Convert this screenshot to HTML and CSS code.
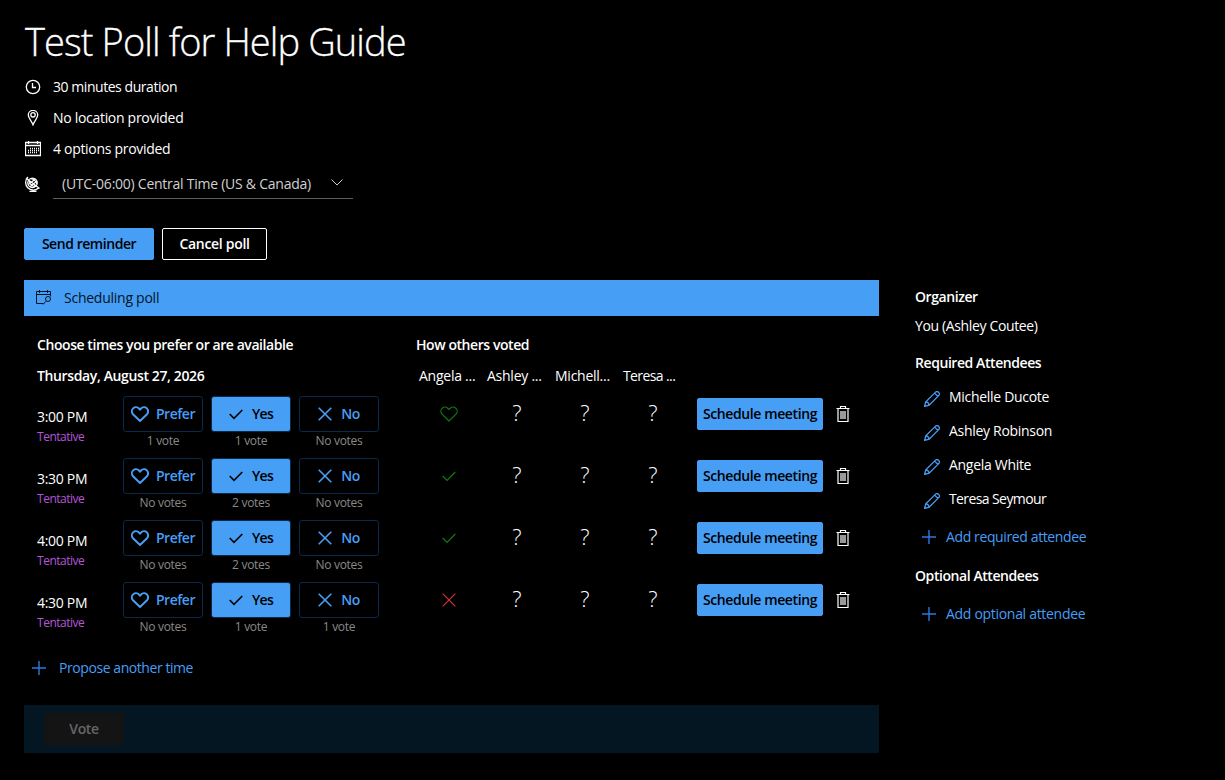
FILE: index.html
```
<!DOCTYPE html>
<html lang="en">
<head>
<meta charset="utf-8">
<title>Test Poll for Help Guide</title>
<link rel="stylesheet" href="styles.css">
</head>
<body>
<svg class="defs" aria-hidden="true">
  <symbol id="heart" viewBox="0 0 18 16"><path d="M9 15 2 8.200A4.100 4.100 0 0 1 8 2.500L9 3.500 10 2.500A4.100 4.100 0 0 1 16 8.200Z"/></symbol>
  <symbol id="check" viewBox="0 0 14 12"><path d="M.7 6 5 10.300 13.300 2"/></symbol>
  <symbol id="cross" viewBox="0 0 14 14"><path d="M.7.700 13.300 13.300M13.300.700.700 13.300"/></symbol>
  <symbol id="plus" viewBox="0 0 14 14"><path d="M7 0V14M0 7H14"/></symbol>
  <symbol id="pencil" viewBox="0 0 16 16"><path d="M.600 15.400 1.800 10.800 11.800.900Q13.200 0 14.600 1.400T15.100 4.200L5.200 14.200ZM1.800 10.800Q4.500 11 5.200 14.200M10.600 2.100 13.900 5.400"/></symbol>
  <symbol id="trash" viewBox="0 0 14 16"><path d="M.5 2.500H13.500M4.500 2.500V.500H9.500V2.500M2 2.500V15.500H12V2.500M5 5V13M7 5V13M9 5V13"/></symbol>
</svg>
<h1 class="title">Test Poll for Help Guide</h1>
<div class="meta"><svg class="meta-icon" viewBox="0 0 16 16"><circle cx="8" cy="8" r="6.700"/><path d="M7.500 4V8.500H11"/></svg><span class="m1">30 minutes duration</span></div>
<div class="meta"><svg class="meta-icon" viewBox="0 0 16 16"><path d="M8 14.800C7 12 3.300 8 3.300 4.800A4.700 4.400 0 0 1 12.700 4.800C12.700 8 9 12 8 14.800Z"/><circle cx="8" cy="4.800" r="2.200"/></svg><span class="m2">No location provided</span></div>
<div class="meta"><svg class="meta-icon" viewBox="0 0 16 16"><path d="M.500 1.500H15.500V14.500H.500ZM.500 4.500H15.500M3.500 0V3M12.500 0V3"/><path class="dots" d="M5 7.500H14M3 9.500H14M3 11.500H12"/></svg><span class="m3">4 options provided</span></div>
<div class="meta zone"><svg class="meta-icon globe" viewBox="0 0 16 16"><circle cx="7.500" cy="6.800" r="4.700"/><path d="M3 1A7 7 0 0 0 13.500 12M1 2 14.500 12.500M3.300 8.500 10.500 3M5 10.800 12 5M3.800 4C5 9 8 11 11 10M5.500 2.600C9 3 11 5 12 8M8 13.500V15.500M4.500 15.500H11.500"/></svg>
  <div class="select"><span class="m4">(UTC-06:00) Central Time (US &amp; Canada)</span><svg class="chevron" viewBox="0 0 12 7"><path d="M.500.500 6 6 11.500.500"/></svg></div></div>
<div class="actions"><button class="btn primary send"><span>Send reminder</span></button><button class="btn outline"><span>Cancel poll</span></button></div>
<div class="layout">
  <main class="poll">
    <div class="banner"><svg class="banner-icon" viewBox="0 0 16 16"><path d="M7.500 13.500H.500V1.500H14.500V6.500M.500 4.500H14.500M3.500 0V3M11.500 0V3M10 11.200 7 14.500"/><circle cx="12" cy="9" r="2.500"/></svg><span>Scheduling poll</span></div>
    <div class="heads"><h2 class="h-choose"><span>Choose times you prefer or are available</span></h2><h2 class="h-others"><span>How others voted</span></h2></div>
    <div class="heads names"><h2 class="h-date"><span>Thursday, August 27, 2026</span></h2><div class="people"><span>Angela ...</span><span>Ashley ...</span><span>Michell...</span><span class="tight">Teresa ...</span></div></div>
    <div class="rows" id="rows"></div>
    <a class="link propose"><svg class="plus"><use href="#plus"/></svg><span>Propose another time</span></a>
    <footer class="votebar"><button class="btn vote" disabled><span>Vote</span></button></footer>
  </main>
  <aside class="side">
    <h2 class="s-org"><span>Organizer</span></h2>
    <p class="you"><span>You (Ashley Coutee)</span></p>
    <h2 class="s-req"><span>Required Attendees</span></h2>
    <ul class="list">
      <li><svg><use href="#pencil"/></svg><span>Michelle Ducote</span></li>
      <li><svg><use href="#pencil"/></svg><span>Ashley Robinson</span></li>
      <li><svg><use href="#pencil"/></svg><span>Angela White</span></li>
      <li><svg><use href="#pencil"/></svg><span class="tight">Teresa Seymour</span></li>
    </ul>
    <a class="link add"><svg class="plus"><use href="#plus"/></svg><span class="fit">Add required attendee</span></a>
    <h2 class="s-opt"><span>Optional Attendees</span></h2>
    <a class="link add"><svg class="plus"><use href="#plus"/></svg><span>Add optional attendee</span></a>
  </aside>
</div>
<script src="poll.js"></script>
</body>
</html>
```
FILE: styles.css
```
* { box-sizing: border-box; }
body { margin: 0; padding: 15px 24px 0; height: 780px; overflow: hidden; background: #000; color: #fff; font: 14px/20px "Open Sans", "Noto Sans", sans-serif; letter-spacing: -0.3px; }
h1, h2, p, ul { margin: 0; padding: 0; }
svg { fill: none; stroke: currentColor; flex: none; }
.defs { position: absolute; width: 0; height: 0; }
.title { height: 56px; padding-left: 1px; font-size: 38px; line-height: 52px; font-weight: 300; letter-spacing: -0.9px; white-space: nowrap; -webkit-text-stroke: 0.3px #fff; }
h2 { font-size: 14px; line-height: 20px; font-weight: 600; letter-spacing: -0.43px; white-space: nowrap; }
.meta { display: flex; align-items: center; gap: 12px; height: 31px; padding-left: 1px; }
.meta-icon { width: 16px; height: 16px; stroke-width: 1.3; }
.m1 { letter-spacing: -0.45px; }
.m4 { letter-spacing: -0.25px; }
.dots { stroke-dasharray: 1 1; }
.zone { height: 30px; margin-top: 5px; }
.select { display: flex; align-items: center; width: 300px; height: 30px; padding: 0 10px 0 9px; justify-content: space-between; border-bottom: 1px solid #5c5c5c; color: #d0d0d0; }
.chevron { width: 12px; height: 7px; margin-top: -3px; }
.actions { display: flex; gap: 8px; margin-top: 29px; }
.btn { height: 32px; padding: 0; border: 1px solid #479ef5; border-radius: 2px; font: inherit; font-weight: 600; letter-spacing: -0.4px; background: #479ef5; color: #000; white-space: nowrap; }
.send { width: 130px; letter-spacing: -0.45px; }
.outline { width: 105px; background: #000; color: #fff; border-color: #fff; letter-spacing: -0.3px; }
.layout { display: flex; gap: 36px; margin-top: 20px; }
.poll { width: 855px; }
.banner { display: flex; align-items: center; gap: 12px; height: 36px; padding-left: 12px; background: #479ef5; color: #001526; letter-spacing: -0.25px; }
.banner-icon { width: 16px; height: 16px; }
.heads { display: flex; padding: 19px 0 0 13px; }
.h-choose, .h-date { width: 379px; }
.names { padding-top: 11px; }
.h-date { letter-spacing: -0.37px; }
.people { display: grid; grid-template-columns: repeat(4, 68px); padding-left: 3px; letter-spacing: -0.25px; }
.people .tight { letter-spacing: -0.6px; }
.rows { padding: 10px 0 0 13px; }
.slot { display: flex; height: 62px; }
.when { width: 86px; padding-top: 11px; }
.when small { display: block; color: #b456d8; font-size: 12px; letter-spacing: -0.48px; }
.choices { display: flex; gap: 8px; width: 292px; }
.choice { width: 80px; text-align: center; }
.choice small { display: block; font-size: 12px; line-height: 18px; color: #8a8a8a; }
.opt { display: flex; align-items: center; justify-content: center; gap: 9px; width: 80px; height: 36px; padding: 0; border: 1px solid #08294a; border-radius: 3px; background: #000; color: #479ef5; font: inherit; font-weight: 600; letter-spacing: -0.45px; }
.opt.on { background: #479ef5; color: #000; letter-spacing: -0.7px; }
.opt svg { stroke-width: 1.6; }
.heart { width: 18px; height: 16px; }
.check { width: 14px; height: 12px; }
.cross { width: 14px; height: 14px; }
.opt .heart { margin-right: -2px; stroke-width: 2; }
.marks { display: grid; grid-template-columns: repeat(4, 68px); width: 282px; height: 35px; align-items: center; justify-items: center; }
.marks svg { stroke-width: 1.2; }
.marks .good { color: #107c10; }
.marks .bad { color: #d13438; }
.q { font-size: 22px; font-weight: 300; line-height: 33px; height: 35px; letter-spacing: 0; }
.schedule { width: 126px; margin-top: 2px; }
.trash { width: 14px; height: 16px; margin: 10px 0 0 12.5px; stroke-width: 1.2; }
.link { display: flex; align-items: center; gap: 13px; height: 20px; color: #479ef5; }
.plus { width: 14px; height: 14px; color: #2f78de; stroke-width: 1.4; }
.propose { margin-top: 14px; padding-left: 8px; letter-spacing: -0.43px; }
.votebar { height: 48px; margin-top: 27px; padding: 8px 20px; background: #041621; }
.vote { width: 80px; background: #141414; border-color: #141414; color: #666; }
.side { padding-top: 7px; white-space: nowrap; }
.you { margin-top: 9px; letter-spacing: -0.36px; }
.s-req { margin-top: 17px; }
.list { list-style: none; margin-top: 14px; }
.list li { display: flex; gap: 9px; height: 34px; padding-left: 9px; }
.list svg { width: 16px; height: 16px; margin-top: 4px; color: #479ef5; stroke-width: 1.3; }
.list .tight { letter-spacing: -0.6px; }
.add { gap: 10px; margin-top: 4px; padding-left: 7px; }
.fit { letter-spacing: -0.38px; }
.s-opt { margin-top: 19px; }
.s-opt + .add { margin-top: 18px; }
```
FILE: poll.js
```
const slots = [
  ["3:00 PM", ["1 vote", "1 vote", "No votes"], "heart", "good"],
  ["3:30 PM", ["No votes", "2 votes", "No votes"], "check", "good"],
  ["4:00 PM", ["No votes", "2 votes", "No votes"], "check", "good"],
  ["4:30 PM", ["No votes", "1 vote", "1 vote"], "cross", "bad"]
];
const icon = (name, extra = "") => `<svg class="${name} ${extra}"><use href="#${name}"/></svg>`;
const options = [["heart", "Prefer"], ["check", "Yes"], ["cross", "No"]];
document.getElementById("rows").innerHTML = slots.map(([time, votes, mark, tone]) => `
  <div class="slot">
    <div class="when"><span>${time}</span><small><span>Tentative</span></small></div>
    <div class="choices">${options.map(([name, label], i) => `<div class="choice"><button class="opt${i === 1 ? " on" : ""}">${icon(name)}<span>${label}</span></button><small><span>${votes[i]}</span></small></div>`).join("")}</div>
    <div class="marks">${icon(mark, tone)}<span class="q">?</span><span class="q">?</span><span class="q">?</span></div>
    <button class="btn primary schedule"><span>Schedule meeting</span></button>
    ${icon("trash")}
  </div>`).join("");
```
